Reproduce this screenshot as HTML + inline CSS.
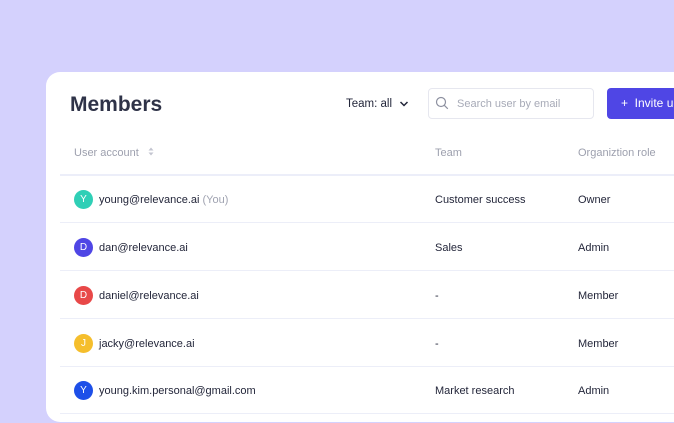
<!DOCTYPE html>
<html><head><style>
*{margin:0;padding:0;box-sizing:border-box}
body{width:674px;height:423px;overflow:hidden;background:#d4d1fd;font-family:"Liberation Sans",sans-serif;position:relative}
.card{position:absolute;left:46px;top:72px;width:700px;height:350px;background:#fff;border-radius:14px;overflow:hidden}
.t{position:absolute;white-space:nowrap}
h1{position:absolute;left:24px;top:21px;font-size:21px;font-weight:bold;color:#2f3348}
.line{position:absolute;left:14px;right:0;height:1px;background:#eceef8}
.av{position:absolute;left:28px;width:19px;height:19px;border-radius:50%;color:#fff;font-size:10px;text-align:center;line-height:19px}
.c{font-size:11px;color:#23263a}
.h{font-size:11px;color:#9da0ae}
</style></head><body>
<div class="card">
<h1>Members</h1>
<div class="t c" style="left:300px;top:26px;font-size:11.5px">Team: all</div>
<svg style="position:absolute;left:353px;top:28px" width="10" height="8"><path d="M1.5 2l3.5 3.5L8.5 2" stroke="#23263a" stroke-width="1.5" fill="none"/></svg>
<div style="position:absolute;left:382px;top:16px;width:166px;height:31px;border:1px solid #e6e7ef;border-radius:4px"></div>
<svg style="position:absolute;left:389px;top:24px" width="14" height="14"><circle cx="6" cy="6" r="4.5" stroke="#8d90a0" stroke-width="1.2" fill="none"/><path d="M9.3 9.3l3.5 3.5" stroke="#8d90a0" stroke-width="1.2"/></svg>
<div class="t" style="left:411px;top:26px;font-size:11px;color:#a7aab7">Search user by email</div>
<div style="position:absolute;left:561px;top:16px;width:120px;height:31px;background:#4f46e5;border-radius:4px;color:#fff;font-size:12px;line-height:31px;padding-left:14px">+&nbsp;&nbsp;Invite u</div>
<div class="t h" style="left:28px;top:75px">User account</div>
<svg style="position:absolute;left:102px;top:74px" width="6" height="11"><path d="M0.5 4.5L3 1.5 5.5 4.5zM0.5 6.5L3 9.5 5.5 6.5z" fill="#c3c5d0"/></svg>
<div class="t h" style="left:389px;top:75px">Team</div>
<div class="t h" style="left:532px;top:75px">Organiztion role</div>
<div class="line" style="top:102px;height:2px;background:#eceef9"></div>
<div class="line" style="top:150px"></div>
<div class="line" style="top:198px"></div>
<div class="line" style="top:246px"></div>
<div class="line" style="top:294px"></div>
<div class="line" style="top:341px"></div>

<div class="av" style="top:118px;background:#2fcfb6">Y</div>
<div class="t c" style="left:53px;top:122px">young@relevance.ai <span style="color:#a0a3b1">(You)</span></div>
<div class="t c" style="left:389px;top:122px">Customer success</div>
<div class="t c" style="left:532px;top:122px">Owner</div>

<div class="av" style="top:166px;background:#4f46e5">D</div>
<div class="t c" style="left:53px;top:170px">dan@relevance.ai</div>
<div class="t c" style="left:389px;top:170px">Sales</div>
<div class="t c" style="left:532px;top:170px">Admin</div>

<div class="av" style="top:214px;background:#e84848">D</div>
<div class="t c" style="left:53px;top:218px">daniel@relevance.ai</div>
<div class="t c" style="left:389px;top:218px">-</div>
<div class="t c" style="left:532px;top:218px">Member</div>

<div class="av" style="top:262px;background:#f5be2c">J</div>
<div class="t c" style="left:53px;top:266px">jacky@relevance.ai</div>
<div class="t c" style="left:389px;top:266px">-</div>
<div class="t c" style="left:532px;top:266px">Member</div>

<div class="av" style="top:309px;background:#1d4fe8">Y</div>
<div class="t c" style="left:53px;top:313px">young.kim.personal@gmail.com</div>
<div class="t c" style="left:389px;top:313px">Market research</div>
<div class="t c" style="left:532px;top:313px">Admin</div>
</div>
</body></html>
